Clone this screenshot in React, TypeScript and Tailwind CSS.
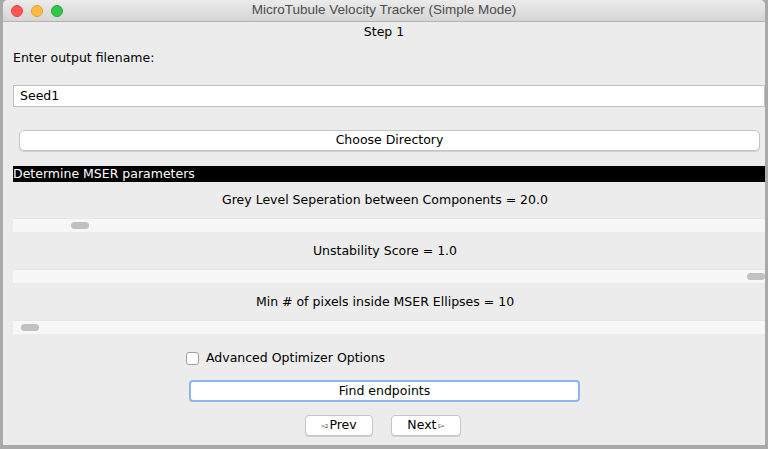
import React from "react";

const font = { fontFamily: '"DejaVu Sans", "Liberation Sans", sans-serif' };

type SliderProps = {
  label: string;
  thumb: number;
  top: string;
};

const Slider = ({ label, thumb, top }: SliderProps) => {
  return (
    <div className={"flex flex-col " + top}>
      <div className="h-[16px] leading-[16px] text-center text-[12.5px] text-black pr-[8px]">{label}</div>
      <div className="mt-[10px] h-[14px] bg-[#f7f7f7] border-t border-[#e6e6e6] flex items-center">
        <div className="h-[7px] w-[18px] rounded-full bg-[#c1c1c1]" style={{ marginLeft: thumb }} />
      </div>
    </div>
  );
};

export default function App() {
  return (
    <div className="w-[768px] h-[449px] bg-[#a9a9a9] px-[3px] pb-[4px]" style={font}>
      <div className="h-full bg-[#ececec] flex flex-col rounded-t-[5px] overflow-hidden">
        {/* Title bar */}
        <div className="h-[22px] shrink-0 bg-gradient-to-b from-[#ebebeb] to-[#d5d5d5] border-b border-[#b3b3b3] flex items-center relative">
          <div className="flex gap-[8px] pl-[8px]">
            <span className="w-[12px] h-[12px] rounded-full bg-[#fc5753] border border-[#df4744]" />
            <span className="w-[12px] h-[12px] rounded-full bg-[#fdbc40] border border-[#de9f34]" />
            <span className="w-[12px] h-[12px] rounded-full bg-[#33c748] border border-[#27aa35]" />
          </div>
          <div className="absolute inset-0 flex items-center justify-center text-[13.5px] text-[#4d4d4d]" style={{ fontFamily: '"Liberation Sans", Arial, sans-serif' }}>
            MicroTubule Velocity Tracker (Simple Mode)
          </div>
        </div>

        <div className="flex flex-col pl-[10px]">
          <div className="mt-[2px] h-[16px] leading-[16px] text-center text-[12.5px] text-black pr-[10px]">Step 1</div>
          <div className="mt-[10px] h-[16px] leading-[16px] text-[12.5px] text-black">Enter output filename:</div>

          <div className="mt-[19px] h-[22px] bg-white border border-[#c3c3c3] flex items-center pl-[6px] text-[12.5px] text-black">
            Seed1
          </div>

          <div className="mt-[23px] ml-[6px] mr-[5px] h-[21px] bg-white border border-[#c4c4c4] rounded-[5px] shadow-[0_1px_0_#d0d0d0] flex items-center justify-center text-[12.5px] text-black">
            Choose Directory
          </div>

          <div className="mt-[15px] h-[16px] bg-black text-white text-[12.5px] leading-[16px] flex items-center">
            Determine MSER parameters
          </div>

          <Slider label="Grey Level Seperation between Components = 20.0" thumb={58} top="mt-[10px]" />
          <Slider label="Unstability Score = 1.0" thumb={734} top="mt-[11px]" />
          <Slider label="Min # of pixels inside MSER Ellipses = 10" thumb={8} top="mt-[11px]" />

          <div className="mt-[16px] flex items-center pl-[173px] gap-[7px]">
            <span className="w-[13px] h-[13px] bg-white border border-[#9f9f9f] rounded-[3px]" />
            <span className="text-[12.5px] text-black leading-[16px]">Advanced Optimizer Options</span>
          </div>

          <div className="mt-[14px] ml-[176px] w-[391px] h-[22px] bg-white border-2 border-[#8ab6ec] rounded-[4px] flex items-center justify-center text-[12.5px] text-black">
            Find endpoints
          </div>

          <div className="mt-[13px] flex justify-center gap-[18px] pr-[12px]">
            <div className="w-[68px] h-[21px] bg-white border border-[#c4c4c4] rounded-[4px] shadow-[0_1px_0_#d0d0d0] flex items-center justify-center text-[12.5px] text-black">
              <span className="text-[8px] mr-[2px]">◅</span>Prev
            </div>
            <div className="w-[70px] h-[21px] bg-white border border-[#c4c4c4] rounded-[4px] shadow-[0_1px_0_#d0d0d0] flex items-center justify-center text-[12.5px] text-black">
              Next<span className="text-[8px] ml-[2px]">▻</span>
            </div>
          </div>
        </div>
      </div>
    </div>
  );
}
